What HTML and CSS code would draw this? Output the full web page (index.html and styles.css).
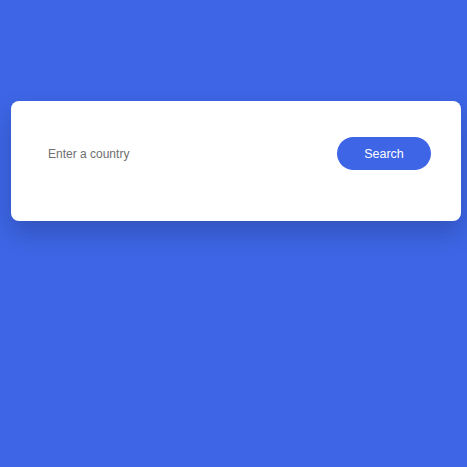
FILE: index.html
```html
<!DOCTYPE html>
<html>
<head>
<meta charset="utf-8">
<link rel="stylesheet" href="styles.css">
</head>
<body>
<div class="page">
  <div class="card">
    <form class="search-form">
      <input class="search-input" type="text" placeholder="Enter a country">
      <button class="search-btn" type="button">Search</button>
    </form>
  </div>
</div>
</body>
</html>
```
FILE: styles.css
```css
html, body {
  margin: 0;
  padding: 0;
  background: #3d65e5;
  height: 100%;
}
.page {
  padding: 101px 0 0 11px;
}
.card {
  width: 450px;
  box-sizing: border-box;
  background: #fff;
  border-radius: 8px;
  padding: 36px 30px 51px 37px;
  box-shadow: 0 12px 24px rgba(0, 0, 0, 0.18);
}
.search-form {
  display: flex;
  align-items: center;
  justify-content: space-between;
}
.search-input {
  border: none;
  outline: none;
  background: transparent;
  font-family: "Liberation Sans", Arial, sans-serif;
  font-size: 12px;
  color: #333;
  padding: 0;
  margin: 0;
  width: 200px;
}
.search-input::placeholder {
  color: #6f6f6f;
}
.search-btn {
  width: 94px;
  height: 33px;
  border: none;
  border-radius: 17px;
  background: #3d65e5;
  color: #fff;
  font-family: "Liberation Sans", Arial, sans-serif;
  font-size: 12.5px;
  padding: 0;
  cursor: pointer;
}
```
